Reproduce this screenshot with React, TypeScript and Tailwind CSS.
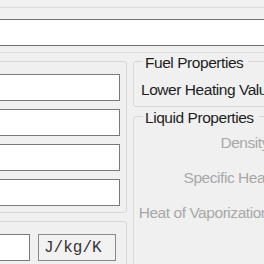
export default function App() {
  const leftFields = [0, 1, 2, 3];
  const liquidLabels = ['Density', 'Specific Heat', 'Heat of Vaporization'];

  return (
    <div className="w-[264px] h-[264px] overflow-hidden bg-[#f0f0f0] font-['Liberation_Sans',Arial,sans-serif] text-[15.5px] tracking-[-0.45px] text-[#1e1e1e]">
      {/* Top strip */}
      <div className="h-[7px]" />
      <div className="h-px bg-[#dcdcdc]" />
      <div className="h-[11px]" />
      <div className="h-[27px] -mx-[2px] border-y border-[#707070] bg-white" />
      <div className="h-[6px]" />
      <div className="h-px bg-[#dcdcdc]" />

      {/* Main row */}
      <div className="flex gap-[6px]">
        {/* Left column */}
        <div className="flex-none w-[127px] mt-[8px]">
          <div className="-ml-[10px] w-[137px] border border-[#d7d7d7] rounded-[3px] pt-[12px] pb-[6px] pr-[6px] flex flex-col gap-[8px]">
            {leftFields.map((i) => (
              <div key={i} className="h-[27px] border border-[#7a7a7a] bg-white" />
            ))}
          </div>
          <div className="mt-[8px] -ml-[10px] w-[137px] h-[60px] border border-[#d7d7d7] rounded-[3px] pt-[12px] flex gap-[8px]">
            <div className="w-[39px] h-[27px] border border-[#7a7a7a] bg-white" />
            <button className="w-[78px] h-[27px] border border-[#8a8a8a] bg-[#f2f2f2] pl-[5px] text-left font-['Liberation_Mono','Courier_New',monospace] text-[16px] tracking-normal text-[#333]">
              J/kg/K
            </button>
          </div>
        </div>

        {/* Right column */}
        <div className="flex-none w-[140px]">
          <fieldset className="border border-[#d7d7d7] rounded-[3px] pb-[7px]">
            <legend className="ml-[9px] pl-[2px] pr-[5px] pt-[2px] leading-[15px]">Fuel Properties</legend>
            <div className="mt-[11px] pl-[7px] leading-[18px] whitespace-nowrap">Lower Heating Value</div>
          </fieldset>
          <fieldset className="mt-[1px] h-[200px] border border-[#d7d7d7] rounded-[3px]">
            <legend className="ml-[9px] pl-[2px] pr-[5px] pt-[2px] leading-[15px]">Liquid Properties</legend>
            <div className="mt-[9px] flex flex-col gap-[17px] pr-[3px]">
              {liquidLabels.map((label) => (
                <div key={label} className="leading-[18px] text-right whitespace-nowrap text-[#a8a8a8]">
                  {label}
                </div>
              ))}
            </div>
          </fieldset>
        </div>
      </div>
    </div>
  );
}
